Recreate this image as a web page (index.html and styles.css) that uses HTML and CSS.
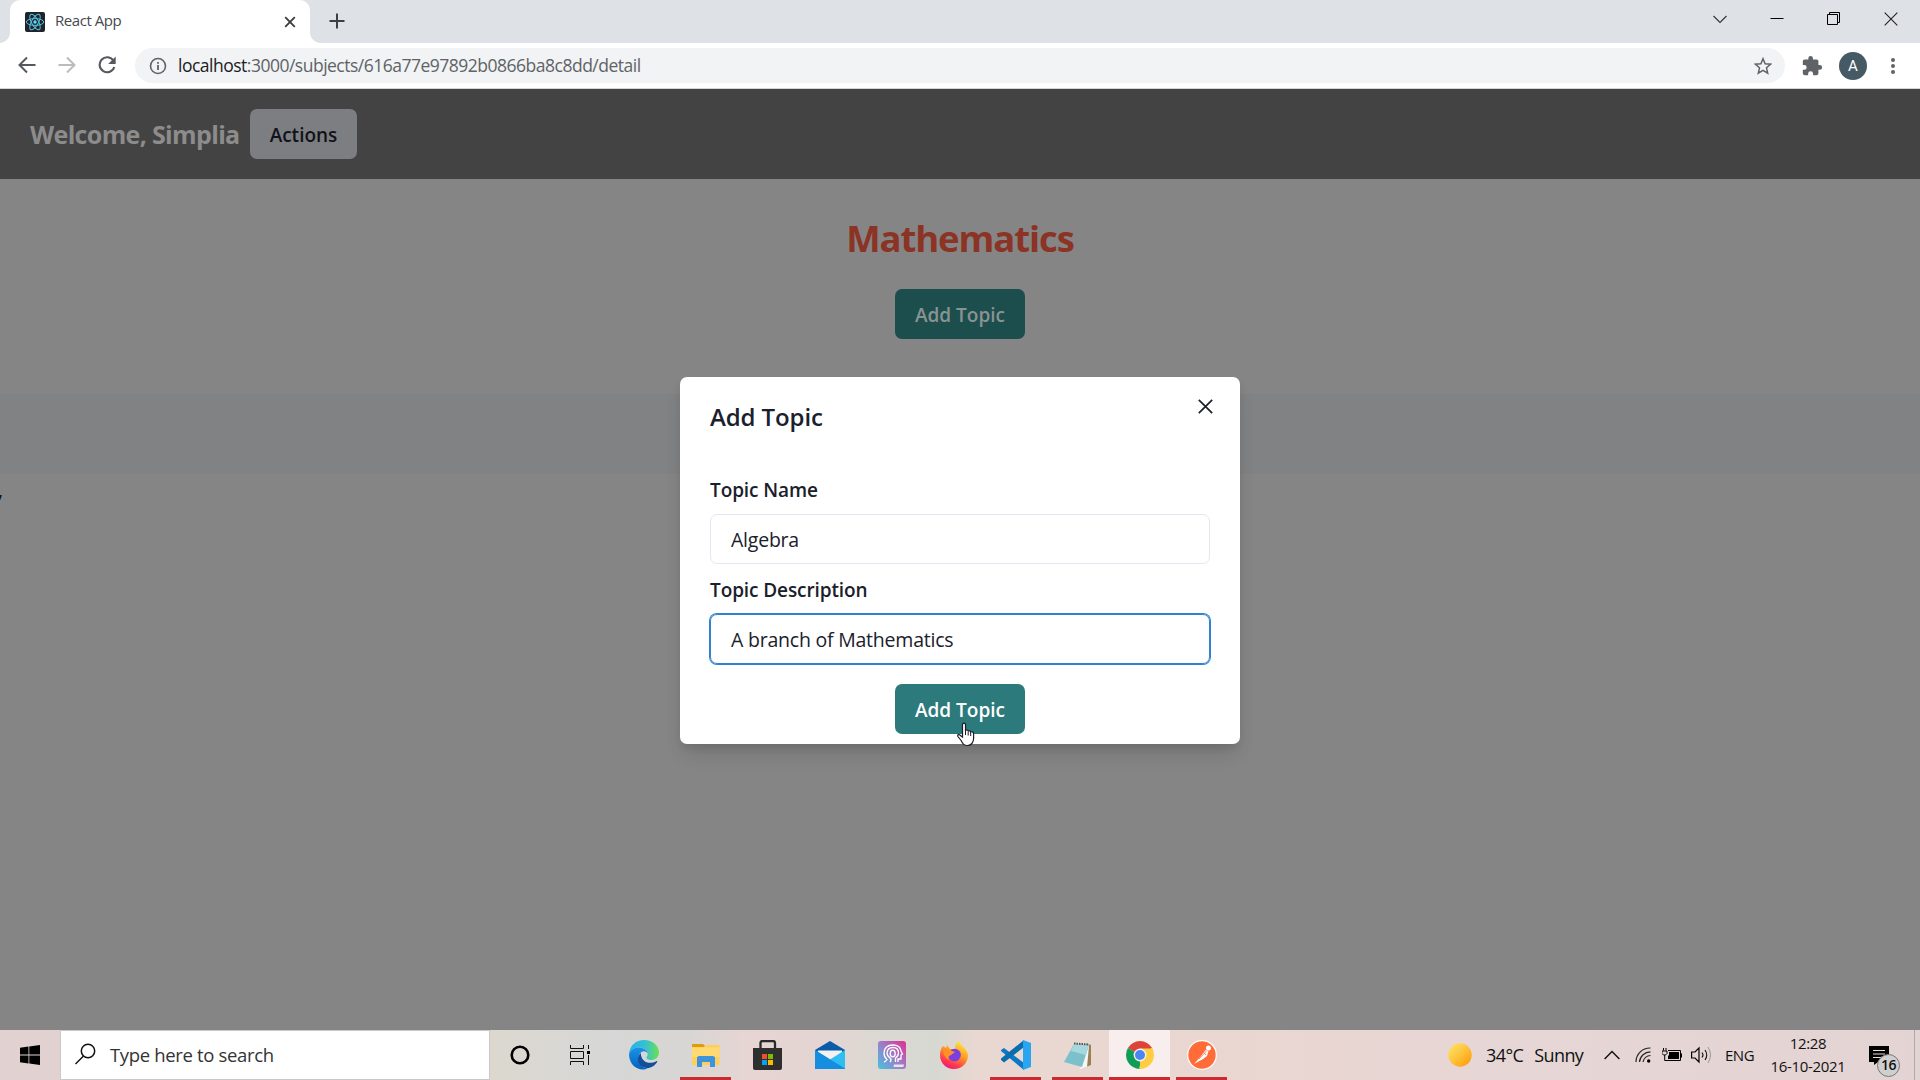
FILE: index.html
```
<!DOCTYPE html>
<html lang="en">
<head>
<meta charset="utf-8">
<title>React App</title>
<link rel="stylesheet" href="styles.css">
</head>
<body>
<div class="screen">
  <div class="tabstrip">
    <div class="tab">
      <svg class="favicon" width="20" height="20" viewBox="0 0 20 20"><rect width="20" height="20" rx="2" fill="#20232a"/><g fill="none" stroke="#53c1de" stroke-width="1"><ellipse cx="10" cy="10" rx="8.7" ry="3.4"/><ellipse cx="10" cy="10" rx="8.7" ry="3.4" transform="rotate(60 10 10)"/><ellipse cx="10" cy="10" rx="8.7" ry="3.4" transform="rotate(120 10 10)"/></g><circle cx="10" cy="10" r="1.7" fill="#61dafb"/></svg>
      <span class="tab-title">React App</span>
      <svg class="tab-close" width="12" height="12" viewBox="0 0 12 12"><path d="M1.2 1.2l9.6 9.6M10.8 1.2L1.2 10.8" stroke="#3c4043" stroke-width="1.9"/></svg>
    </div>
    <svg class="new-tab" width="16" height="16" viewBox="0 0 16 16"><path d="M8 .5v15M.5 8h15" stroke="#3c4043" stroke-width="2"/></svg>
    <div class="window-controls">
      <svg width="14" height="14" viewBox="0 0 14 14"><path d="M.5 4L7 10.500 13.500 4" fill="none" stroke="#333" stroke-width="1.1"/></svg>
      <svg width="14" height="14" viewBox="0 0 14 14"><path d="M.5 6.500h13" stroke="#000"/></svg>
      <svg width="14" height="14" viewBox="0 0 14 14"><path d="M.5 2.500h10v10H.5zM2.500 2.500v-2h10v10h-2" fill="none" stroke="#000"/></svg>
      <svg width="14" height="14" viewBox="0 0 14 14"><path d="M.7 .7l12.600 12.600M13.300 .7L.7 13.300" stroke="#222" stroke-width="1.1"/></svg>
    </div>
  </div>
  <div class="toolbar">
    <div class="nav-icons">
      <svg width="18" height="18" viewBox="0 0 18 18"><path d="M17.500 9H2M9 1.500L1.500 9 9 16.500" fill="none" stroke="#55595e" stroke-width="2"/></svg>
      <svg width="18" height="18" viewBox="0 0 18 18"><path d="M.5 9H16M9 1.500L16.500 9 9 16.500" fill="none" stroke="#babcbe" stroke-width="2"/></svg>
      <svg width="18" height="18" viewBox="0 0 18 18"><path d="M15.500 4.800A7.500 7.500 0 1 0 16.300 11" fill="none" stroke="#55595e" stroke-width="2.100"/><path d="M17.700 .5v7.500h-7.500z" fill="#55595e"/></svg>
    </div>
    <div class="address">
      <svg width="18" height="18" viewBox="0 0 18 18"><circle cx="9" cy="9" r="7.500" fill="none" stroke="#5f6368" stroke-width="1.600"/><path d="M9 8v5M9 5v1.800" stroke="#5f6368" stroke-width="1.800"/></svg>
      <span class="url"><b>localhost</b>:3000/subjects/616a77e97892b0866ba8c8dd/detail</span>
      <svg class="star" width="18" height="18" viewBox="0 0 18 18"><path d="M9 1.700l2.100 5 5.500.5-4.100 3.600 1.200 5.400L9 13.400l-4.700 2.800 1.200-5.400-4.100-3.600 5.500-.5z" fill="none" stroke="#5f6368" stroke-width="1.500"/></svg>
    </div>
    <svg class="puzzle" width="22" height="22" viewBox="0 0 24 24"><path fill="#5f6368" d="M20.500 11H19V7c0-1.100-.9-2-2-2h-4V3.500a2.500 2.500 0 0 0-5 0V5H4c-1.100 0-2 .9-2 2v3.800h1.500a2.700 2.700 0 0 1 0 5.400H2V20c0 1.100.9 2 2 2h3.800v-1.500a2.700 2.700 0 0 1 5.400 0V22H17c1.100 0 2-.9 2-2v-4h1.500a2.500 2.500 0 0 0 0-5z"/></svg>
    <div class="avatar">A</div>
    <svg class="dots" width="4" height="18" viewBox="0 0 4 18"><g fill="#5f6368"><circle cx="2" cy="3" r="2"/><circle cx="2" cy="9" r="2"/><circle cx="2" cy="15" r="2"/></g></svg>
  </div>
  <main class="page">
    <header class="app-header"><h2 class="welcome">Welcome, Simplia</h2><button class="btn actions">Actions</button></header>
    <section class="subject"><h1>Mathematics</h1><button class="btn teal muted">Add Topic</button></section>
    <div class="band"></div>
    <div class="comma">,</div>
    <form class="modal">
      <div class="modal-title"><span>Add Topic</span><svg width="15" height="15" viewBox="0 0 15 15"><path d="M.8 .8l13.400 13.400M14.200 .8L.8 14.200" stroke="#1a202c" stroke-width="1.700"/></svg></div>
      <label>Topic Name</label>
      <div class="field"><span>Algebra</span></div>
      <label>Topic Description</label>
      <div class="field focused"><span>A branch of Mathematics</span></div>
      <button class="btn teal" type="button">Add Topic</button>
    </form>
    <svg class="cursor" width="18" height="25" viewBox="0 0 18 25"><path d="M5.500 15V3c0-2.500 3-2.500 3 0v6c.3-1.500 2.700-1.300 2.700.5.500-1.200 2.500-.8 2.500.8.600-1 2.900-.6 2.900 1.200v5c0 4-2.500 7-6 7-4 0-5-2-6.500-5L.9 14.500c-.8-2 1.300-2.500 2.500-1z" fill="#fff" stroke="#1b1b2b" stroke-width="1.200"/><path d="M8.500 9v4M11.200 10v3.500M13.700 11v3" stroke="#1b1b2b"/></svg>
  </main>
  <footer class="taskbar">
    <div class="start"><svg width="20" height="20" viewBox="0 0 20 20"><path d="M0 2.800l8.500-1.200v8H0zM9.300 1.500L20 0v9.600H9.300zM0 10.400h8.500v8L0 17.200zM9.300 10.400H20V20l-10.700-1.500z"/></svg></div>
    <div class="search"><svg width="22" height="22" viewBox="0 0 22 22"><circle cx="14" cy="8" r="6.700" fill="none" stroke="#111" stroke-width="1.500"/><path d="M9.500 13L1.500 21" stroke="#111" stroke-width="1.500"/></svg><span class="search-hint">Type here to search</span></div>
    <div class="slot cortana"><svg width="20" height="20" viewBox="0 0 20 20"><circle cx="10" cy="10" r="8.300" fill="none" stroke="#000" stroke-width="2.600"/></svg></div>
    <div class="slot view"><svg width="20" height="20" viewBox="0 0 20 20"><path d="M.5 0v3.500h13V0M.5 20v-3.500h13V20M.5 6.500h13v7H.5zM18.500 0v4M18.500 10v10" fill="none" stroke="#111" stroke-width="1"/><path d="M17 6h3v3h-3z"/></svg></div>
    <div class="slot edge"><svg width="30" height="30" viewBox="0 0 30 30"><defs><linearGradient id="e1"><stop stop-color="#24b2ec"/><stop offset=".55" stop-color="#35c1d0"/><stop offset="1" stop-color="#6ae34c"/></linearGradient><linearGradient id="e2" x2="0" y2="1"><stop stop-color="#1994e6"/><stop offset="1" stop-color="#0463be"/></linearGradient></defs><path d="M0 14C1 5 7 0 15 0c9 0 15 6 15 12.500 0 5-4 7.500-8 7.500-3 0-4.500-1.200-4.500-2.500 0-1 1.200-1.500 1.200-3.500C18.700 10 15 7.500 10 7.500 5 7.500 1.500 10 0 14z" fill="url(#e1)"/><path d="M0 14c1.500-4 5-6.500 9.500-6.500 5 0 9.200 2.500 9.200 6.500-.5-1.700-2-2.700-3.700-2.700-3 0-5.500 3-5.500 7 0 6 4.500 10 9.500 10.300C9 32 0 25 0 14z" fill="url(#e2)"/><path d="M11.800 13c-4.500 4-3.300 10 .5 13 6 4.500 13 1 15.800-4 .5-.8 0-1.300-.8-.8C20 25 12 22 11.800 13z" fill="#12509c"/></svg></div>
    <div class="slot folder open"><svg width="28" height="24" viewBox="0 0 28 24"><path d="M0 1h11l2 2v4H0z" fill="#e09b0b"/><path d="M0 4h12l2-2h13.500v20H0z" fill="#ffcf57"/><path d="M0 4.500h12.500L14 3v1.500h13.500V14H0z" fill="#ffda72"/><path d="M5 24V14l2-1h14l2 1v10h-5v-5h-8v5z" fill="#3d94dc"/></svg></div>
    <div class="slot store"><svg width="30" height="30" viewBox="0 0 30 30"><path d="M7.500 9V3Q7.500 1 9.500 1h10.500Q22 1 22 3v6" fill="none" stroke="#2a2a2a" stroke-width="2.300"/><path d="M0 8h29v20q0 2-2 2H2q-2 0-2-2z" fill="#2f2f2f"/><path d="M9 14h5v5H9z" fill="#f25022"/><path d="M15 14h5v5h-5z" fill="#7fba00"/><path d="M9 20h5v5H9z" fill="#00a4ef"/><path d="M15 20h5v5h-5z" fill="#ffb900"/></svg></div>
    <div class="slot mail"><svg width="30" height="28" viewBox="0 0 30 28"><path d="M0 9L15 0l15 9v3H0z" fill="#0a5ba8"/><path d="M3 9.500h24v10H3z" fill="#f2f2f2"/><path d="M0 9l15 9.500L30 9v19H0z" fill="#30bdf2"/><path d="M0 9l30 18.500V28H0z" fill="#168ee0"/></svg></div>
    <div class="slot msi"><svg width="28" height="28" viewBox="0 0 28 28"><defs><linearGradient id="m1" x1="0" y1="1" x2="1" y2="0"><stop stop-color="#42c4df"/><stop offset=".5" stop-color="#9b7fc8"/><stop offset="1" stop-color="#e52b91"/></linearGradient></defs><rect width="28" height="28" rx="3" fill="url(#m1)"/><g fill="none" stroke="#fff" stroke-width="1.300"><path d="M20 21v-3h3v-4l1.500-1L23 10q-1-6-8-6-8.500 0-9 8 0 4 3 6.500-1 2-3 2.500"/><path d="M12 21q2-2 0-4-3-2-3-5 .5-5.500 6-5.500t5.500 5.500q0 3-3 5v4"/><ellipse cx="14.700" cy="12.500" rx="2.500" ry="3.300"/></g><path d="M16 23.500h10l-.7 2.500H15.500z" fill="#f5dcf0"/></svg></div>
    <div class="slot firefox"><svg width="28" height="28" viewBox="0 0 28 28"><defs><linearGradient id="f1" x1=".8" y1="0" x2=".3" y2="1"><stop stop-color="#fff04a"/><stop offset=".45" stop-color="#ff9a1f"/><stop offset=".8" stop-color="#ff3850"/><stop offset="1" stop-color="#e81879"/></linearGradient></defs><path d="M3 5l3 2 1-3 3 4 5 0c0-4 1-6 4-8 1 4 8 7 9 14C28 22 22 28 14 28S0 22 0 14C0 11 1 7 3 5z" fill="url(#f1)"/><circle cx="14.500" cy="14" r="6.300" fill="#7b3fe0"/><path d="M3 8c4-1 6 0 9 2l3 1-4 3c-3 1-3 3-2 5-4-2-6-6-6-11z" fill="#ff9026"/></svg></div>
    <div class="slot code open"><svg width="30" height="30" viewBox="0 0 30 30"><path d="M0 10l3-2 20 15v7L0 11z" fill="#0d79c4"/><path d="M0 20l3 2.500L23 7V0L0 18.500z" fill="#0a6dae"/><path d="M22 0l8 3v24l-8 3z" fill="#29a5f2"/></svg></div>
    <div class="slot note open"><svg width="28" height="27" viewBox="0 0 28 27"><path d="M23 2l4 1v20l-7 3z" fill="#9a8055"/><path d="M22 3l3 1-2 21-7 2z" fill="#f7f7f4"/><path d="M10 2l15 1-7 22-18-5z" fill="#7cc0cc"/><path d="M10 2l15 1-3 10-15-4z" fill="#a6d8de"/><path d="M10 1.500l15 1" stroke="#555" stroke-width="2" stroke-dasharray="1.500 1"/></svg></div>
    <div class="slot chrome open active"><svg width="28" height="28" viewBox="0 0 28 28"><path d="M14 14L1.900 7A14 14 0 0 1 26.100 7z" fill="#db4437"/><path d="M14 14l12.100-7A14 14 0 0 1 14 28z" fill="#ffcd40"/><path d="M14 14v14A14 14 0 0 1 1.900 7z" fill="#0f9d58"/><path d="M14 7.500h12.300l.6 1.500L20 17l-6 11-1-1 3-8z" fill="#ffcd40"/><circle cx="14" cy="14" r="6.400" fill="#f1f1f1"/><circle cx="14" cy="14" r="5" fill="#4a86f0"/></svg></div>
    <div class="slot postman open"><svg width="30" height="30" viewBox="0 0 30 30"><circle cx="15" cy="15" r="14.300" fill="#ff6c37" stroke="#fff" stroke-width="1.200"/><circle cx="21.500" cy="8" r="2.500" fill="#fff"/><path d="M18.500 10l3 1-1.500 5-4 3-9 5 7-8z" fill="#fff"/><path d="M19.500 11l-7.500 8M17 12.500l2 2.500" stroke="#ff6c37" stroke-width=".8"/></svg></div>
    <div class="tray">
      <svg class="sun" width="24" height="24" viewBox="0 0 24 24"><defs><linearGradient id="s1" x2="1" y2="1"><stop stop-color="#ffe66a"/><stop offset=".5" stop-color="#ffc23b"/><stop offset="1" stop-color="#ff9500"/></linearGradient></defs><circle cx="12" cy="12" r="11.700" fill="url(#s1)"/></svg>
      <span class="weather"><span>34°C</span><span>Sunny</span></span>
      <svg class="chev" width="16" height="10" viewBox="0 0 16 10"><path d="M.6 9L8 1.500 15.400 9" fill="none" stroke="#111" stroke-width="1.400"/></svg>
      <svg class="wifi" width="16" height="16" viewBox="0 0 16 16"><g fill="none" stroke="#222" stroke-width="1.200"><path d="M1 15A14 14 0 0 1 15.500 1M4.500 15A11 11 0 0 1 15.500 4.800M8 15a8 8 0 0 1 7.500-6.500"/></g><circle cx="13.700" cy="14" r="1.700"/></svg>
      <svg class="battery" width="20" height="14" viewBox="0 0 20 14"><path d="M1.500 0v2.500M4 0v2.500M0 3h5v2.500L3.500 7h-2L0 5.500zM2.700 7v5.500h3" fill="none" stroke="#000"/><path d="M7 4h10v7H6V8l1-1z"/><path d="M6 2.500h12.500v10H5M19.500 5.500v4" fill="none" stroke="#000"/></svg>
      <svg class="sound" width="21" height="18" viewBox="0 0 21 18"><path d="M.6 6H4l4-4v14l-4-4H.6z" fill="none" stroke="#000" stroke-width="1.200"/><path d="M11 6.500q2 2.500 0 5M14 4q3.500 5 0 10" fill="none" stroke="#111" stroke-width="1.100"/><path d="M17 1q5 8 0 16" fill="none" stroke="#999"/></svg>
      <span class="lang">ENG</span>
      <span class="clock"><span>12:28</span><span>16-10-2021</span></span>
      <span class="notice"><svg width="20" height="19" viewBox="0 0 20 19"><path d="M0 0h20v16H9l-4 3v-3H0z"/><path d="M4 4.500h12M4 8h12M4 11.500h8" stroke="#eadad9" stroke-width="1.200"/></svg><span class="count">16</span></span>
    </div>
  </footer>
</div>
</body>
</html>
```
FILE: styles.css
```
* { box-sizing: border-box; }
body { margin: 0; overflow: hidden; font-family: "Open Sans", "Noto Sans", sans-serif; }
svg { display: block; flex: none; }
span { white-space: nowrap; }
.screen { width: 1920px; height: 1080px; display: flex; flex-direction: column; }
.tabstrip { height: 43px; background: #dee1e6; display: flex; align-items: center; padding: 0 22px 0 10px; }
.tab { position: relative; width: 300px; height: 43px; background: #fff; border-radius: 10px 10px 0 0; display: flex; align-items: center; padding: 0 14px 0 15px; }
.tab::before, .tab::after { content: ""; position: absolute; bottom: 0; width: 10px; height: 10px; }
.tab::before { left: -10px; background: radial-gradient(circle at 0 0, transparent 9.5px, #fff 10px); }
.tab::after { right: -10px; background: radial-gradient(circle at 100% 0, transparent 9.5px, #fff 10px); }
.tab-title { margin-left: 10px; margin-bottom: 3px; font-size: 15px; letter-spacing: -.45px; color: #45494d; }
.tab-close { margin-left: auto; }
.new-tab { margin-left: 19px; margin-bottom: 1px; }
.window-controls { margin-left: auto; display: flex; gap: 43px; margin-bottom: 6px; }
.toolbar { height: 46px; background: #fff; border-bottom: 1px solid #d4d5d7; display: flex; align-items: center; padding: 0 25px 0 18px; }
.nav-icons { display: flex; gap: 22px; margin-bottom: 1px; }
.address { width: 1650px; height: 35px; border-radius: 18px; background: #f1f3f4; margin-left: 19px; display: flex; align-items: center; padding: 0 13px 0 14px; }
.url { margin-left: 11px; margin-bottom: 2px; font-size: 17.5px; letter-spacing: -.5px; color: #5f6368; }
.url b { font-weight: 400; color: #202124; }
.star { margin-left: auto; }
.puzzle { margin-left: 16px; }
.avatar { margin-left: 16px; width: 28px; height: 28px; border-radius: 50%; background: #455a64; color: #fff; font: 15px/28px Roboto, sans-serif; text-align: center; }
.dots { margin-left: auto; }
.page { position: relative; height: 941px; background: #858585; }
.app-header { height: 90px; background: #434343; display: flex; align-items: center; padding-left: 30px; gap: 10px; }
.welcome { margin: 0; width: 210px; white-space: nowrap; font-size: 25px; font-weight: 700; color: #8c8c8c; letter-spacing: -.65px; }
.btn { height: 50px; border: 0; border-radius: 7px; font: 600 19px "Open Sans", "Noto Sans", sans-serif; padding: 2px 0 0; display: flex; align-items: center; justify-content: center; }
.actions { width: 107px; background: #7d7e82; color: #101319; }
.teal { width: 130px; background: #2c7a7b; color: #fff; }
.teal.muted { background: #1b4e4d; color: #8b9392; }
.subject { height: 215px; padding-top: 30px; display: flex; flex-direction: column; align-items: center; }
.subject h1 { margin: 0 0 20px; height: 60px; font-size: 36.5px; line-height: 58px; letter-spacing: -1.1px; color: #8b3325; }
.band { height: 80px; background: #808284; }
.comma { margin-top: 2px; margin-left: -2px; font-size: 20px; line-height: 28px; color: #101520; }
.modal { position: absolute; left: 680px; top: 288px; width: 560px; height: 367px; padding: 20px 30px 0; background: #fff; border-radius: 7px; box-shadow: 0 12px 19px -4px rgba(0,0,0,.14), 0 5px 8px -2px rgba(0,0,0,.08); display: flex; flex-direction: column; color: #1a202c; }
.modal-title { height: 67px; display: flex; justify-content: space-between; line-height: 40px; font-size: 24px; font-weight: 600; letter-spacing: -.1px; }
.modal-title svg { margin: 2px -3px 0 0; }
.modal label { font-size: 19px; font-weight: 600; letter-spacing: -.1px; line-height: 30px; margin: 11px 0 9px; height: 30px; }
.field { height: 50px; border: 1px solid #e2e8f0; border-radius: 7px; padding: 1px 0 0 20px; display: flex; align-items: center; font-size: 19.5px; letter-spacing: -.22px; }
.field.focused { border-color: #3182ce; box-shadow: 0 0 0 1px #3182ce; }
.modal .teal { align-self: center; margin-top: 20px; }
.cursor { position: absolute; left: 957px; top: 633px; }
.taskbar { height: 50px; display: flex; background: linear-gradient(90deg, #e1d2d1 0, #e1d2d1 60px, #dcd8cf 490px, #d6d7d6 610px, #d8d6d4 690px, #e6d5d3 745px, #e5d5d2 820px, #d9d8d2 890px, #d8d8d2 940px, #e9d8d1 975px, #ead6d1 1250px, #e6d6d5 1500px, #e4d3d3 1920px); }
.start { width: 60px; display: flex; align-items: center; padding-left: 20px; }
.search { width: 430px; height: 50px; background: #fff; border: 1px solid #c9c9c9; display: flex; align-items: center; padding: 0 0 2px 13px; gap: 14px; }
.search-hint { font-size: 18.5px; letter-spacing: -.34px; color: #333; }
.slot { height: 50px; display: flex; align-items: center; justify-content: center; width: 51px; margin-right: 11px; }
.open { border-bottom: 3px solid #c92b2f; padding-top: 3px; }
.cortana { width: 60px; margin: 0; }
.view { width: 59px; margin: 0; }
.edge { width: 70px; margin: 0 1px 0 0; }
.active { width: 61px; margin-right: 6px; margin-left: -5px; background: #f7eeed; }
.tray { flex: 1; display: flex; align-items: center; border-right: 1px solid #aaa; margin-right: 5px; padding-left: 210px; color: #111; }
.weather { display: flex; gap: 11px; margin-left: 14px; font-size: 18px; letter-spacing: -.6px; width: 98px; }
.chev { margin-left: 20px; }
.wifi { margin-left: 15px; }
.battery { margin-left: 11px; }
.sound { margin-left: 9px; }
.lang { margin-left: 13px; width: 29px; font-size: 15px; letter-spacing: -.5px; }
.clock { margin-left: 16px; width: 76px; display: flex; flex-direction: column; align-items: center; font-size: 15px; letter-spacing: -.35px; line-height: 23px; }
.notice { position: relative; margin-left: 23px; }
.count { position: absolute; left: 8px; top: 8px; width: 23px; height: 23px; border: 1px solid #777; border-radius: 50%; background: #d0cfcf; font-size: 14px; letter-spacing: -.5px; line-height: 20px; text-align: center; font-weight: 600; }
```
